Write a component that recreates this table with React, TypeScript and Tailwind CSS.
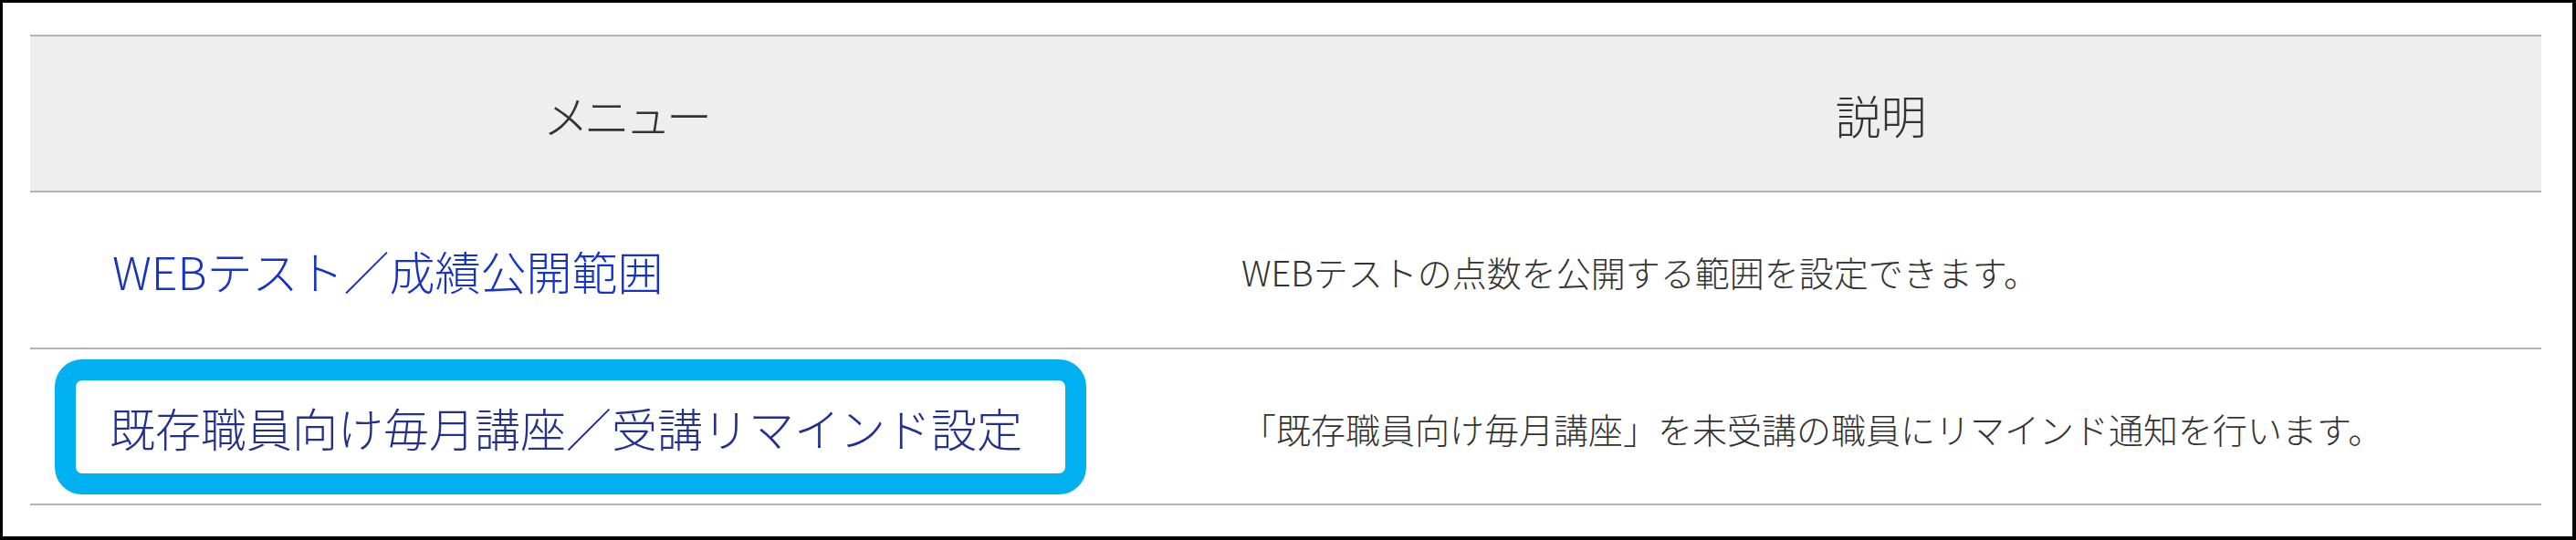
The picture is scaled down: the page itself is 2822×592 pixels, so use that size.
import React from 'react';

const rows = [
  {
    menu: 'WEBテスト／成績公開範囲',
    desc: 'WEBテストの点数を公開する範囲を設定できます。',
    highlight: false,
  },
  {
    menu: '既存職員向け毎月講座／受講リマインド設定',
    desc: '「既存職員向け毎月講座」を未受講の職員にリマインド通知を行います。',
    highlight: true,
  },
];

export default function App() {
  return (
    <div className="w-[2822px] h-[592px] box-border bg-white border-black border-l-[3px] border-t-[3px] border-r-4 border-b-4 pl-[30px] pr-[34px] pt-[35px] font-['Noto_Sans_CJK_JP',sans-serif] font-light">
      <div className="grid grid-cols-[1304px_1fr]">
        {/* header */}
        <div className="h-[173px] flex items-center justify-center bg-[#eeeeee] border-y-2 border-[#b4b4b4] text-[50px] text-[#333333] leading-none">
          <span className="tracking-[-0.1em]">メニュー</span>
        </div>
        <div className="h-[173px] flex items-center justify-center bg-[#eeeeee] border-y-2 border-[#b4b4b4] text-[50px] text-[#333333] leading-none">
          説明
        </div>

        {rows.map((row, i) => (
          <React.Fragment key={i}>
            <div
              className={
                row.highlight
                  ? 'h-[171px] flex items-center pl-[27px] border-b-2 border-[#b4b4b4]'
                  : 'h-[172px] flex items-center pl-[90px] border-b-2 border-[#b4b4b4]'
              }
            >
              {row.highlight ? (
                <span className="inline-block border-[23px] border-[#00b0f0] rounded-[30px] pl-[37px] pr-[47px] py-[26px] text-[50px] leading-[50px] text-[#22308f] whitespace-nowrap">
                  {row.menu}
                </span>
              ) : (
                <a className="text-[50px] leading-none text-[#1533c8] whitespace-nowrap">{row.menu}</a>
              )}
            </div>
            <div
              className={
                row.highlight
                  ? 'h-[171px] flex items-center pl-[23px] pt-[4px] border-b-2 border-[#b4b4b4] text-[38px] leading-none text-[#333333] whitespace-nowrap'
                  : 'h-[172px] flex items-center pl-[23px] pt-[4px] border-b-2 border-[#b4b4b4] text-[38px] leading-none text-[#333333] whitespace-nowrap'
              }
            >
              {row.desc}
            </div>
          </React.Fragment>
        ))}
      </div>
    </div>
  );
}
